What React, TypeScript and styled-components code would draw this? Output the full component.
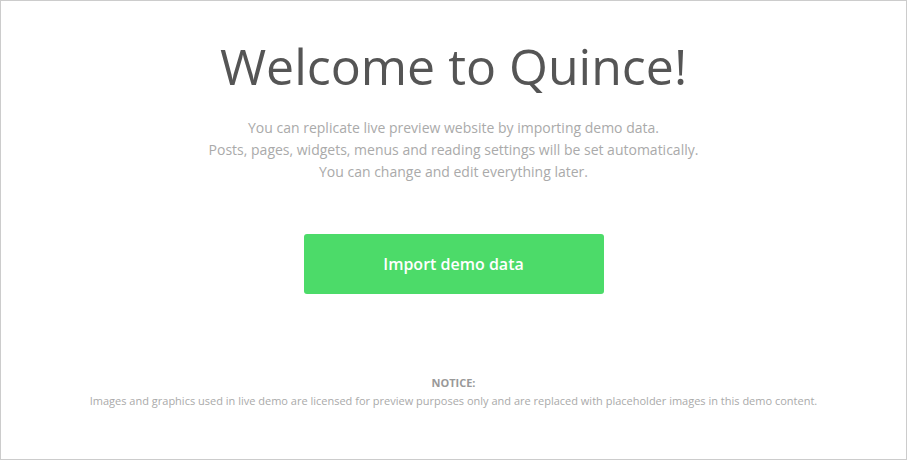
import React from "react";
import styled, { createGlobalStyle } from "styled-components";

const Global = createGlobalStyle`
  html, body { margin: 0; padding: 0; background: #fff; }
  body { font-family: "Open Sans", "Liberation Sans", sans-serif; }
`;

const Frame = styled.div`
  box-sizing: border-box;
  width: 907px;
  height: 460px;
  border: 1px solid #cccccc;
  display: flex;
  flex-direction: column;
  align-items: center;
  text-align: center;
  padding-top: 30px;
`;

const Title = styled.h1`
  margin: 0;
  font-size: 50px;
  font-weight: 400;
  line-height: 70px;
  color: #555555;
`;

const Lead = styled.p`
  margin: 16px 0 0;
  font-size: 14px;
  line-height: 22px;
  color: #aaaaaa;
`;

const ImportButton = styled.button`
  margin-top: 51px;
  width: 300px;
  height: 60px;
  border: none;
  border-radius: 3px;
  background: #4cdb69;
  color: #ffffff;
  font-family: "Open Sans", "Liberation Sans", sans-serif;
  font-size: 16px;
  font-weight: 600;
  cursor: pointer;
`;

const Notice = styled.div`
  margin-top: 80px;
  font-size: 11px;
  line-height: 18px;
  color: #aaaaaa;
`;

const NoticeLabel = styled.div`
  font-weight: 700;
  color: #999999;
`;

export default function App() {
  return (
    <>
      <Global />
      <Frame>
        <Title>Welcome to Quince!</Title>
        <Lead>
          You can replicate live preview website by importing demo data.
          <br />
          Posts, pages, widgets, menus and reading settings will be set automatically.
          <br />
          You can change and edit everything later.
        </Lead>
        <ImportButton>Import demo data</ImportButton>
        <Notice>
          <NoticeLabel>NOTICE:</NoticeLabel>
          Images and graphics used in live demo are licensed for preview purposes only and are replaced with placeholder images in this demo content.
        </Notice>
      </Frame>
    </>
  );
}
